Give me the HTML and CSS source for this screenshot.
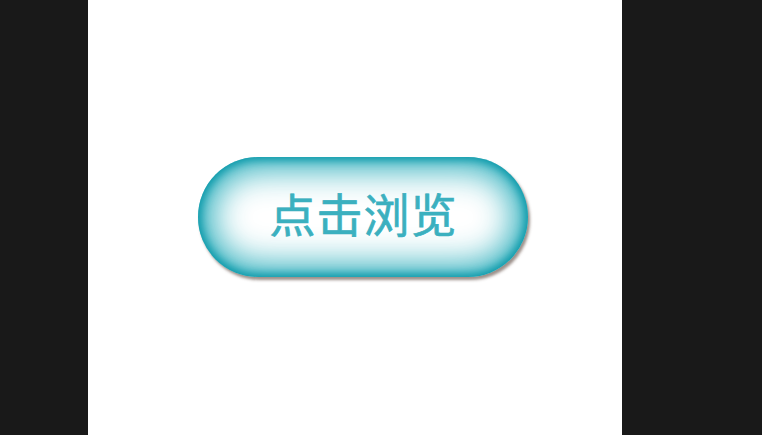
FILE: index.html
```html
<!DOCTYPE html>
<html lang="zh">
<head>
<meta charset="utf-8">
<link rel="stylesheet" href="styles.css">
</head>
<body>
<div class="page">
  <main class="canvas">
    <button class="browse-btn" type="button">点击浏览</button>
  </main>
</div>
</body>
</html>
```
FILE: styles.css
```css
html, body {
  margin: 0;
  padding: 0;
  height: 100%;
  background: #191919;
}
.page {
  display: flex;
  justify-content: flex-start;
  height: 100%;
  padding-left: 88px;
}
.canvas {
  width: 534px;
  height: 435px;
  background: #ffffff;
  display: flex;
  align-items: center;
  justify-content: center;
}
.browse-btn {
  box-sizing: border-box;
  width: 330px;
  height: 120px;
  margin-top: -2px;
  margin-left: 16px;
  border: none;
  border-radius: 60px;
  background: #ffffff;
  box-shadow: inset 0 0 8px 3px #0b98a9, inset 0 0 34px 12px rgba(18, 164, 180, 0.9), 2px 3px 3px rgba(90, 70, 60, 0.6);
  color: #3bb0bf;
  font-family: "Noto Sans CJK SC", "Noto Sans", sans-serif;
  font-size: 46px;
  font-weight: 400;
  -webkit-text-stroke: 0.7px #3bb0bf;
  letter-spacing: 1px;
  text-indent: 1px;
  line-height: 1;
  padding: 0 0 10px 0;
  cursor: pointer;
}
```
